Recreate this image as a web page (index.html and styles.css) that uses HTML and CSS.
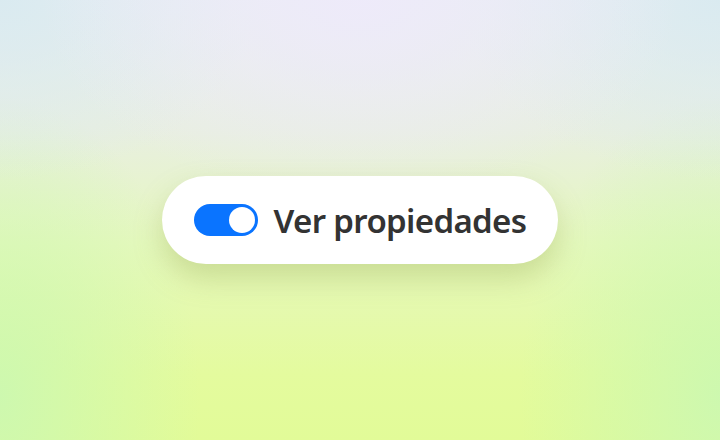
FILE: index.html
```html
<!DOCTYPE html>
<html lang="es">
<head>
<meta charset="utf-8">
<link rel="stylesheet" href="styles.css">
</head>
<body>
<main class="stage">
  <div class="pill">
    <span class="toggle" role="switch" aria-checked="true"><span class="knob"></span></span>
    <span class="label">Ver propiedades</span>
  </div>
</main>
</body>
</html>
```
FILE: styles.css
```css
html, body { margin: 0; padding: 0; }
body {
  width: 720px;
  height: 440px;
  overflow: hidden;
  font-family: "Noto Sans", "Open Sans", sans-serif;
}
.stage {
  width: 720px;
  height: 440px;
  display: flex;
  align-items: center;
  justify-content: center;
  background:
    radial-gradient(ellipse 320px 200px at 50% 0%, rgba(238,234,250,0.95), rgba(238,234,250,0) 100%),
    radial-gradient(ellipse 260px 180px at 0% 0%, rgba(216,234,240,0.9), rgba(216,234,240,0) 100%),
    radial-gradient(ellipse 260px 180px at 100% 0%, rgba(216,234,240,0.9), rgba(216,234,240,0) 100%),
    radial-gradient(ellipse 200px 300px at 0% 90%, rgba(204,248,176,0.95), rgba(204,248,176,0) 100%),
    radial-gradient(ellipse 200px 300px at 100% 90%, rgba(204,248,176,0.95), rgba(204,248,176,0) 100%),
    linear-gradient(180deg, #e9eef2 0%, #e8efe0 30%, #e6f8be 55%, #e4fb9e 85%, #e2fb98 100%);
}
.pill {
  display: flex;
  align-items: center;
  gap: 16px;
  height: 88px;
  padding: 0 32px;
  box-sizing: border-box;
  background: #ffffff;
  border-radius: 44px;
  box-shadow: 0 14px 28px rgba(150, 170, 80, 0.35);
}
.toggle {
  position: relative;
  width: 64px;
  height: 32px;
  border-radius: 16px;
  background: #0a74ff;
  flex: none;
}
.knob {
  position: absolute;
  top: 3px;
  right: 3px;
  width: 26px;
  height: 26px;
  border-radius: 50%;
  background: #fff;
}
.label {
  font-size: 33px;
  font-weight: 600;
  color: #333333;
  letter-spacing: -0.65px;
  line-height: 1;
}
```
